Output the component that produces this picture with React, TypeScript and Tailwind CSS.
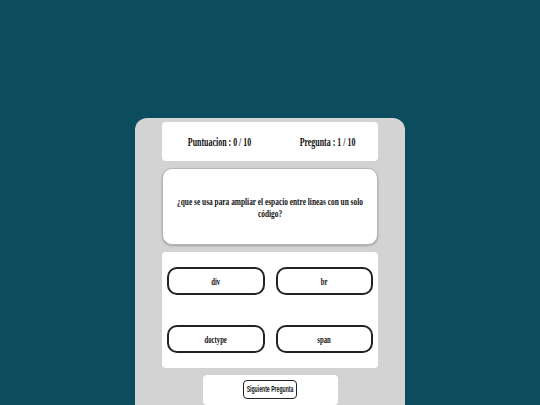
export default function App() {
  const opciones = ["div", "br", "doctype", "span"];
  return (
    <div className="h-[405px] w-[540px] overflow-hidden bg-[#0b4c5f] pt-[118px]">
      <div className="mx-auto flex h-[300px] w-[270px] flex-col items-center gap-[7px] rounded-[12px] bg-[#d3d3d3] pt-[4px]">
        {/* marcador */}
        <div className="flex h-[39px] w-[216px] items-center justify-around rounded-[4px] bg-white font-['Liberation_Serif',serif] text-[12px] font-bold text-[#111]">
          <span className="inline-block w-[97px] origin-center scale-x-[0.66] whitespace-nowrap text-center">Puntuacion : 0 / 10</span>
          <span className="inline-block w-[85px] origin-center scale-x-[0.66] whitespace-nowrap text-center">Pregunta : 1 / 10</span>
        </div>

        {/* pregunta */}
        <div className="flex h-[77px] w-[216px] items-center justify-center rounded-[10px] border border-[#b5b5b5] bg-white shadow-[0_1px_2px_rgba(0,0,0,0.25)]">
          <p className="w-[300px] shrink-0 origin-center scale-x-[0.67] text-center font-['Liberation_Serif',serif] text-[11px] font-bold leading-[12px] text-[#111]">
            ¿que se usa para ampliar el espacio entre lineas con un solo
            <br />
            código?
          </p>
        </div>

        {/* opciones */}
        <div className="grid h-[116px] w-[216px] grid-cols-2 content-between gap-x-[11px] rounded-[4px] bg-white px-[5px] py-[15px]">
          {opciones.map((o) => (
            <button
              key={o}
              className="flex h-[28px] items-center justify-center rounded-[10px] border-2 border-[#222] bg-white font-['Liberation_Serif',serif] text-[10px] font-bold text-[#111]"
            >
              <span className="inline-block origin-center scale-x-[0.67]">{o}</span>
            </button>
          ))}
        </div>

        {/* siguiente */}
        <div className="flex h-[30px] w-[135px] items-start justify-center rounded-[4px] bg-white pt-[5px]">
          <button className="flex h-[19px] w-[54px] items-center justify-center overflow-visible rounded-[4px] border-[1.5px] border-[#222] bg-white font-['Liberation_Sans',sans-serif] text-[9px] font-bold text-[#111]">
            <span className="inline-block shrink-0 origin-center scale-x-[0.57] whitespace-nowrap">Siguiente Pregunta</span>
          </button>
        </div>
      </div>
    </div>
  );
}
